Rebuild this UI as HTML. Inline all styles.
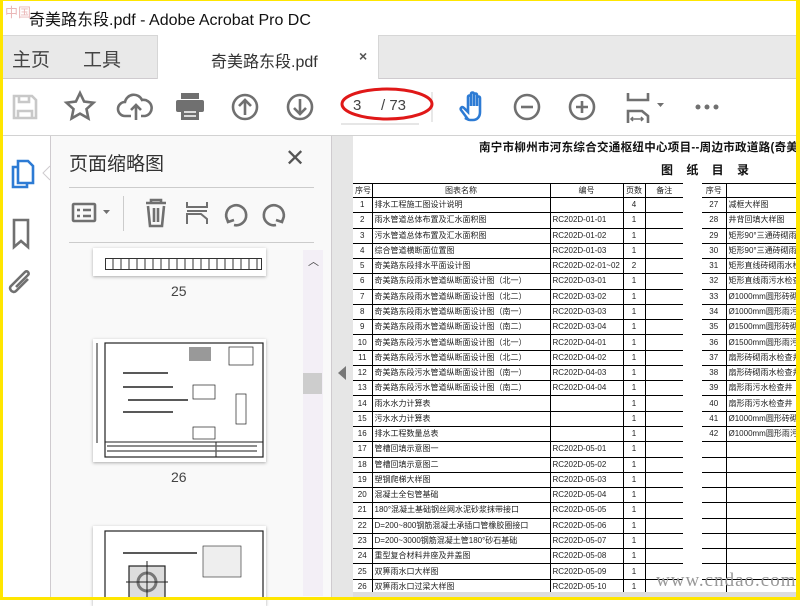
<!DOCTYPE html>
<html><head><meta charset="utf-8">
<style>
*{margin:0;padding:0;box-sizing:border-box}
body{width:800px;height:600px;overflow:hidden;position:relative;background:#fff;font-family:"Liberation Sans","Noto Sans CJK SC",sans-serif}
.a{position:absolute}
.ic{position:absolute}
table{border-collapse:collapse;position:absolute;font-family:"Liberation Sans","Noto Sans CJK SC",sans-serif;font-size:8px;color:#222;table-layout:fixed}
td{height:15.28px;border-top:1.5px solid #000;border-bottom:1.5px solid #000;padding:0 2px;white-space:nowrap;overflow:hidden;line-height:12px}
td.c{text-align:center}
td.v{border-right:1.5px solid #000}
.th td{height:14px;text-align:center}
</style></head><body>
<!-- title bar -->
<div class="a" style="left:0;top:0;width:800px;height:35px;background:#fff"></div>
<div class="a" style="left:5px;top:2px;font-size:13px;color:#d88;opacity:.6">中国</div>
<div class="a" style="left:29px;top:6px;font-size:16px;color:#111">奇美路东段.pdf - Adobe Acrobat Pro DC</div>
<!-- tabs -->
<div class="a" style="left:0;top:35px;width:800px;height:44px;background:#e9e9e9;border-top:1px solid #d6d6d6;border-bottom:1px solid #cfcbcf"></div>
<div class="a" style="left:12px;top:45px;font-size:19px;color:#444">主页</div>
<div class="a" style="left:83px;top:45px;font-size:19px;color:#444">工具</div>
<div class="a" style="left:157px;top:35px;width:222px;height:44px;background:#fff;border-left:1px solid #d6d6d6;border-right:1px solid #d6d6d6"></div>
<div class="a" style="left:211px;top:48px;font-size:16px;color:#333">奇美路东段.pdf</div>
<div class="a" style="left:359px;top:48px;font-size:14px;color:#555;font-weight:bold">×</div>
<!-- toolbar -->
<div class="a" style="left:0;top:79px;width:800px;height:57px;background:#fff;border-bottom:1px solid #d2d2d2"></div>
<svg class="ic" style="left:0;top:80px" width="800" height="56" viewBox="0 80 800 56" fill="none" stroke="#707070" stroke-width="2.6">
<!-- save -->
<g stroke="#c8c8c8"><path d="M14 96h18l4 4v18H14z"/><path d="M19 96v6h10v-6M18 118v-7h14v7"/></g>
<!-- star -->
<path d="M80 93l4.1 8.6 9.4 1.1-7 6.4 1.9 9.3-8.4-4.8-8.4 4.8 1.9-9.3-7-6.4 9.4-1.1z"/>
<!-- cloud -->
<path d="M131 116h-6a7 7 0 0 1 0-14 9 9 0 0 1 17-2 7 7 0 0 1 3 16h-4"/><path d="M136 120v-14M131 110l5-5 5 5"/>
<!-- print -->
<g fill="#707070" stroke="none"><rect x="181" y="93" width="18" height="6"/><rect x="176" y="100" width="28" height="12" rx="2"/><rect x="181" y="109" width="18" height="11"/></g>
<path d="M184 112h12M184 116h12" stroke="#fff" stroke-width="1.5"/>
<!-- up/down -->
<circle cx="245" cy="107" r="12"/><path d="M245 115v-15M239 106l6-6 6 6"/>
<circle cx="300" cy="107" r="12"/><path d="M300 99v15M294 108l6 6 6-6"/>
<!-- divider -->
<path d="M432 92v30" stroke="#d0d0d0" stroke-width="1"/>
<path d="M341 124h78" stroke="#ccc" stroke-width="1"/>
<!-- hand -->
<path stroke="#2d7bd4" d="M467 118l-6-8c-1-2 1-4 3-2l4 4V97c0-2 3-2 3 0v9V94c0-2 3-2 3 0v12V95c0-2 3-2 3 0v11V98c0-2 3-2 3 0v14c0 5-3 8-7 8h-3c-2 0-3-1-5-2z"/>
<!-- zoom out / in -->
<circle cx="527" cy="107" r="12"/><path d="M521 107h12"/>
<circle cx="582" cy="107" r="12"/><path d="M576 107h12M582 101v12"/>
<!-- fit -->
<path d="M628 93v7h20v-7M628 123v-12h14l6 5v7"/><path d="M631 119h12M633 117l-2 2 2 2M641 117l2 2-2 2" stroke-width="1.5"/>
<path d="M657 103h7l-3.5 4z" fill="#707070" stroke="none"/>
<g fill="#707070" stroke="none"><circle cx="698" cy="107" r="2.5"/><circle cx="707" cy="107" r="2.5"/><circle cx="716" cy="107" r="2.5"/></g>
</svg>
<div class="a" style="left:353px;top:97px;font-size:15px;color:#444">3</div>
<div class="a" style="left:381px;top:97px;font-size:15px;color:#444">/ 73</div>
<svg class="ic" style="left:338px;top:84px" width="100" height="42"><ellipse cx="49" cy="20" rx="45" ry="15" fill="none" stroke="#e01818" stroke-width="3"/></svg>
<!-- left icon col -->
<div class="a" style="left:0;top:136px;width:51px;height:464px;background:#fff;border-right:1px solid #cfcbcf"></div>
<svg class="ic" style="left:0;top:136px" width="60" height="200" fill="none" stroke-width="2.6">
<path stroke="#2d7bd4" d="M18 31h-5v20h14v-4M18 25h10l5 5v17H18z"/>
<path stroke="#707070" d="M14 84h14v27l-7-6-7 6z"/>
<path stroke="#707070" d="M28 143l-12 12c-3 3-8-2-5-5l14-14c2-2 5 1 3 3l-12 12"/>
<path d="M50 44l-7-7 7-7" stroke="#cfcbcf" stroke-width="1" fill="#fff"/>
</svg>
<!-- panel -->
<div class="a" style="left:51px;top:136px;width:280px;height:464px;background:#f9f9f9"></div>
<div class="a" style="left:69px;top:149px;font-size:19px;color:#333">页面缩略图</div>
<div class="a" style="left:285px;top:144px;font-size:24px;color:#555">✕</div>
<div class="a" style="left:69px;top:187px;width:245px;height:1px;background:#ccc"></div>
<div class="a" style="left:69px;top:242px;width:245px;height:1px;background:#ccc"></div>
<div class="a" style="left:123px;top:196px;width:1px;height:35px;background:#ccc"></div>
<svg class="ic" style="left:60px;top:190px" width="250" height="50" fill="none" stroke="#707070" stroke-width="2.6">
<rect x="13" y="14" width="22" height="17" rx="1"/><path d="M17 20h3M23 20h8M17 26h3M23 26h8" />
<path d="M43 20h7l-3.5 4z" fill="#707070" stroke="none"/>
<path d="M86 13h20M91 13v-3h10v3M88 16l2 20h12l2-20M94 18v14M98 18v14"/>
<path d="M127 12v5h20v-5M127 34v-10h14l6 5v5M127 21h20" stroke-width="2"/>
<path d="M174 35a10 10 0 1 0-6-4M166 26l2 6 6-2"/>
<path d="M216 35a10 10 0 1 1 6-4M224 26l-2 6-6-2"/>
</svg>
<!-- scrollbar -->
<div class="a" style="left:303px;top:250px;width:20px;height:346px;background:#f3eff6"></div>
<div class="a" style="left:303px;top:373px;width:19px;height:21px;background:#cdcdcd"></div>
<div class="a" style="left:308px;top:253px;font-size:11px;color:#444">︿</div>
<!-- thumbs -->
<div class="a" style="left:93px;top:248px;width:173px;height:28px;background:#fff;box-shadow:0 1px 3px #aaa"></div>
<div class="a" style="left:105px;top:258px;width:157px;height:12px;border:1px solid #333;background:repeating-linear-gradient(90deg,#fff 0 6px,#999 6px 8px)"></div>
<div class="a" style="left:171px;top:283px;font-size:14px;color:#444">25</div>
<div class="a" style="left:93px;top:339px;width:173px;height:123px;background:#fff;box-shadow:0 1px 3px #aaa"></div>
<svg class="ic" style="left:93px;top:339px" width="173" height="123" fill="none" stroke="#222">
<rect x="12" y="4" width="158" height="114" stroke-width="1.2"/><path d="M12 103h158M123 103v15M4 4v100" stroke-width="1"/>
<path d="M30 34h45M30 48h50M30 73h50M35 61h60M170 25" stroke-width="1.5"/>
<rect x="96" y="8" width="22" height="14" fill="#999" stroke="none"/><rect x="136" y="8" width="24" height="18" stroke-width="0.7"/>
<rect x="100" y="46" width="22" height="14" stroke-width="0.7"/><rect x="100" y="88" width="22" height="12" stroke-width="0.7"/><rect x="143" y="55" width="10" height="30" stroke-width="0.7"/>
<path d="M14 107h150M14 112h150" stroke="#666" stroke-width="1.5"/>
</svg>
<div class="a" style="left:171px;top:469px;font-size:14px;color:#444">26</div>
<div class="a" style="left:93px;top:526px;width:173px;height:80px;background:#fff;box-shadow:0 1px 3px #aaa"></div>
<svg class="ic" style="left:93px;top:526px" width="173" height="74" fill="none" stroke="#222">
<rect x="12" y="5" width="158" height="80" stroke-width="1.2"/><path d="M30 27h74" stroke-width="1.5"/>
<rect x="36" y="40" width="36" height="34" fill="#ddd" stroke-width="1.2"/><circle cx="54" cy="56" r="9" stroke="#777" stroke-width="3"/>
<path d="M54 35v40M33 56h42" stroke-width="1"/><rect x="110" y="20" width="38" height="31" stroke-width="0.6" fill="#eee"/>
</svg>
<!-- gray column -->
<div class="a" style="left:331px;top:136px;width:22px;height:464px;background:#e6e6e6;border-left:1px solid #cfcbcf"></div>
<svg class="ic" style="left:336px;top:365px" width="12" height="16"><path d="M10 1L2 8l8 7z" fill="#777"/></svg>
<!-- doc -->
<div class="a" style="left:353px;top:136px;width:447px;height:464px;background:#fff"></div>
<div class="a" style="left:479px;top:139px;font-size:11.5px;font-weight:bold;color:#111;white-space:nowrap;letter-spacing:.3px">南宁市柳州市河东综合交通枢纽中心项目--周边市政道路(奇美路</div>
<div class="a" style="left:661px;top:161px;font-size:12px;font-weight:bold;color:#111;letter-spacing:5px;white-space:nowrap">图 纸 目 录</div>
<table style="left:353px;top:183px;width:330px">
<colgroup><col style="width:19px"><col style="width:178px"><col style="width:73px"><col style="width:22px"><col style="width:38px"></colgroup>
<tr class="th"><td class="v">序号</td><td class="v">图表名称</td><td class="v">编号</td><td class="v">页数</td><td>备注</td></tr>
<tr><td class="c v">1</td><td class="v">排水工程施工图设计说明</td><td class="v"></td><td class="c v">4</td><td></td></tr>
<tr><td class="c v">2</td><td class="v">雨水管道总体布置及汇水面积图</td><td class="v">RC202D-01-01</td><td class="c v">1</td><td></td></tr>
<tr><td class="c v">3</td><td class="v">污水管道总体布置及汇水面积图</td><td class="v">RC202D-01-02</td><td class="c v">1</td><td></td></tr>
<tr><td class="c v">4</td><td class="v">综合管道横断面位置图</td><td class="v">RC202D-01-03</td><td class="c v">1</td><td></td></tr>
<tr><td class="c v">5</td><td class="v">奇美路东段排水平面设计图</td><td class="v">RC202D-02-01~02</td><td class="c v">2</td><td></td></tr>
<tr><td class="c v">6</td><td class="v">奇美路东段雨水管道纵断面设计图（北一）</td><td class="v">RC202D-03-01</td><td class="c v">1</td><td></td></tr>
<tr><td class="c v">7</td><td class="v">奇美路东段雨水管道纵断面设计图（北二）</td><td class="v">RC202D-03-02</td><td class="c v">1</td><td></td></tr>
<tr><td class="c v">8</td><td class="v">奇美路东段雨水管道纵断面设计图（南一）</td><td class="v">RC202D-03-03</td><td class="c v">1</td><td></td></tr>
<tr><td class="c v">9</td><td class="v">奇美路东段雨水管道纵断面设计图（南二）</td><td class="v">RC202D-03-04</td><td class="c v">1</td><td></td></tr>
<tr><td class="c v">10</td><td class="v">奇美路东段污水管道纵断面设计图（北一）</td><td class="v">RC202D-04-01</td><td class="c v">1</td><td></td></tr>
<tr><td class="c v">11</td><td class="v">奇美路东段污水管道纵断面设计图（北二）</td><td class="v">RC202D-04-02</td><td class="c v">1</td><td></td></tr>
<tr><td class="c v">12</td><td class="v">奇美路东段污水管道纵断面设计图（南一）</td><td class="v">RC202D-04-03</td><td class="c v">1</td><td></td></tr>
<tr><td class="c v">13</td><td class="v">奇美路东段污水管道纵断面设计图（南二）</td><td class="v">RC202D-04-04</td><td class="c v">1</td><td></td></tr>
<tr><td class="c v">14</td><td class="v">雨水水力计算表</td><td class="v"></td><td class="c v">1</td><td></td></tr>
<tr><td class="c v">15</td><td class="v">污水水力计算表</td><td class="v"></td><td class="c v">1</td><td></td></tr>
<tr><td class="c v">16</td><td class="v">排水工程数量总表</td><td class="v"></td><td class="c v">1</td><td></td></tr>
<tr><td class="c v">17</td><td class="v">管槽回填示意图一</td><td class="v">RC202D-05-01</td><td class="c v">1</td><td></td></tr>
<tr><td class="c v">18</td><td class="v">管槽回填示意图二</td><td class="v">RC202D-05-02</td><td class="c v">1</td><td></td></tr>
<tr><td class="c v">19</td><td class="v">塑钢爬梯大样图</td><td class="v">RC202D-05-03</td><td class="c v">1</td><td></td></tr>
<tr><td class="c v">20</td><td class="v">混凝土全包管基础</td><td class="v">RC202D-05-04</td><td class="c v">1</td><td></td></tr>
<tr><td class="c v">21</td><td class="v">180°混凝土基础钢丝网水泥砂浆抹带接口</td><td class="v">RC202D-05-05</td><td class="c v">1</td><td></td></tr>
<tr><td class="c v">22</td><td class="v">D=200~800钢筋混凝土承插口管橡胶圈接口</td><td class="v">RC202D-05-06</td><td class="c v">1</td><td></td></tr>
<tr><td class="c v">23</td><td class="v">D=200~3000钢筋混凝土管180°砂石基础</td><td class="v">RC202D-05-07</td><td class="c v">1</td><td></td></tr>
<tr><td class="c v">24</td><td class="v">重型复合材料井座及井盖图</td><td class="v">RC202D-05-08</td><td class="c v">1</td><td></td></tr>
<tr><td class="c v">25</td><td class="v">双箅雨水口大样图</td><td class="v">RC202D-05-09</td><td class="c v">1</td><td></td></tr>
<tr><td class="c v">26</td><td class="v">双箅雨水口过梁大样图</td><td class="v">RC202D-05-10</td><td class="c v">1</td><td></td></tr>
</table>
<table style="left:702px;top:183px;width:120px">
<colgroup><col style="width:24px"><col style="width:96px"></colgroup>
<tr class="th"><td class="v">序号</td><td></td></tr>
<tr><td class="c v">27</td><td>减框大样图</td></tr>
<tr><td class="c v">28</td><td>井背回填大样图</td></tr>
<tr><td class="c v">29</td><td>矩形90°三通砖砌雨</td></tr>
<tr><td class="c v">30</td><td>矩形90°三通砖砌雨</td></tr>
<tr><td class="c v">31</td><td>矩形直线砖砌雨水检</td></tr>
<tr><td class="c v">32</td><td>矩形直线雨污水检查</td></tr>
<tr><td class="c v">33</td><td>Ø1000mm圆形砖砌雨水</td></tr>
<tr><td class="c v">34</td><td>Ø1000mm圆形雨污水检</td></tr>
<tr><td class="c v">35</td><td>Ø1500mm圆形砖砌雨水</td></tr>
<tr><td class="c v">36</td><td>Ø1500mm圆形雨污水检</td></tr>
<tr><td class="c v">37</td><td>扇形砖砌雨水检查井</td></tr>
<tr><td class="c v">38</td><td>扇形砖砌雨水检查井（</td></tr>
<tr><td class="c v">39</td><td>扇形雨污水检查井（</td></tr>
<tr><td class="c v">40</td><td>扇形雨污水检查井（</td></tr>
<tr><td class="c v">41</td><td>Ø1000mm圆形砖砌污水</td></tr>
<tr><td class="c v">42</td><td>Ø1000mm圆形雨污水检</td></tr>
<tr><td class="v"></td><td></td></tr><tr><td class="v"></td><td></td></tr><tr><td class="v"></td><td></td></tr><tr><td class="v"></td><td></td></tr><tr><td class="v"></td><td></td></tr><tr><td class="v"></td><td></td></tr><tr><td class="v"></td><td></td></tr><tr><td class="v"></td><td></td></tr><tr><td class="v"></td><td></td></tr><tr><td class="v"></td><td></td></tr>
</table>
<div class="a" style="left:656px;top:570px;font-size:19px;color:#999;font-family:'Liberation Serif',serif;letter-spacing:1px">www.cndao.com</div>
<div class="a" style="left:353px;top:592px;width:443px;height:5px;background:#ddd"></div>
<!-- yellow frame -->
<div class="a" style="left:0;top:0;width:3px;height:600px;background:#ffe600"></div>
<div class="a" style="left:796px;top:0;width:4px;height:600px;background:#ffe600"></div>
<div class="a" style="left:0;top:597px;width:800px;height:3px;background:#ffe600"></div>
<div class="a" style="left:0;top:0;width:800px;height:1px;background:#ffe600"></div>
</body></html>
